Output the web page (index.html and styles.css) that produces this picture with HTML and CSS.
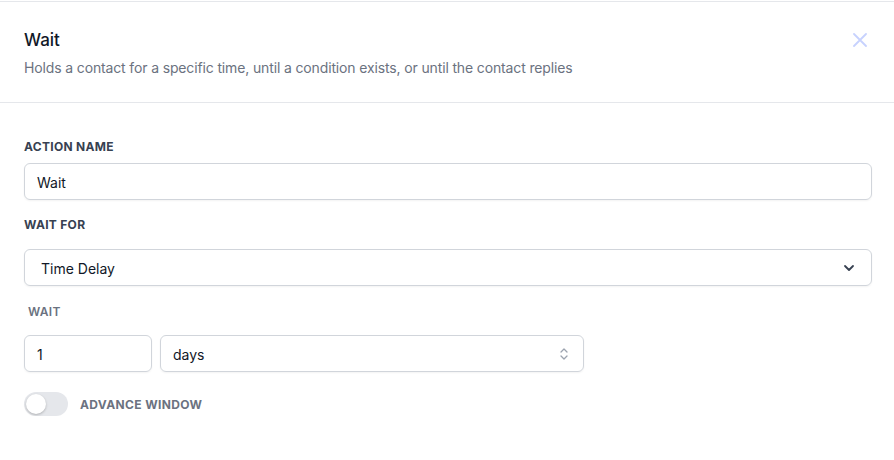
FILE: index.html
```html
<!DOCTYPE html>
<html>
<head>
<meta charset="utf-8">
<link rel="stylesheet" href="styles.css">
</head>
<body>
<div class="panel">
  <header class="head">
    <div class="head-text">
      <h1 class="title">Wait</h1>
      <p class="subtitle">Holds a contact for a specific time, until a condition exists, or until the contact replies</p>
    </div>
    <button class="close" aria-label="Close">
      <svg width="14" height="14" viewBox="0 0 14 14"><path d="M1 1L13 13M13 1L1 13" stroke="#c7d2fe" stroke-width="1.8" stroke-linecap="round"/></svg>
    </button>
  </header>
  <div class="form">
    <label class="label">ACTION NAME</label>
    <div class="input full">Wait</div>
    <label class="label mt">WAIT FOR</label>
    <div class="input full select sel-pad">
      <span>Time Delay</span>
      <svg class="chev" width="12" height="8" viewBox="0 0 12 8"><path d="M2 2L6 6L10 2" fill="none" stroke="#374151" stroke-width="1.8" stroke-linecap="round" stroke-linejoin="round"/></svg>
    </div>
    <label class="label sub">WAIT</label>
    <div class="row">
      <div class="input num">1</div>
      <div class="input unit select">
        <span>days</span>
        <svg width="10" height="16" viewBox="0 0 10 16"><path d="M2 6L5 3L8 6M2 10L5 13L8 10" fill="none" stroke="#9ca3af" stroke-width="1.3" stroke-linecap="round" stroke-linejoin="round"/></svg>
      </div>
    </div>
    <div class="toggle-row">
      <span class="toggle"><span class="knob"></span></span>
      <span class="toggle-label">ADVANCE WINDOW</span>
    </div>
  </div>
</div>
</body>
</html>
```
FILE: styles.css
```css
* { box-sizing: border-box; }
html, body { margin: 0; padding: 0; background: #fff; }
body { font-family: Inter, "Noto Sans", sans-serif; color: #111827; }
.panel { padding-top: 1px; }
.head {
  border-top: 1px solid #e5e7eb;
  border-bottom: 1px solid #e5e7eb;
  height: 102px;
  padding: 24px 27px 0 24px;
  display: flex;
  justify-content: space-between;
  align-items: flex-start;
}
.title { margin: 0; font-size: 17px; line-height: 28px; font-weight: 500; color: #111827; }
.subtitle { margin: 4px 0 0; font-size: 14px; line-height: 20px; color: #6b7280; letter-spacing: -0.01em; }
.close { border: 0; background: none; padding: 0; margin-top: 7px; display: flex; }
.form { padding: 33px 22px 0 24px; display: flex; flex-direction: column; }
.label { display: block; font-size: 12px; line-height: 20px; padding-top: 1px; font-weight: 700; letter-spacing: 0.025em; color: #374151; margin-bottom: 6px; }
.label.mt { margin-top: 14px; margin-bottom: 14px; }
.label.sub { margin-top: 14px; margin-bottom: 13px; padding-top: 2px; padding-left: 4px; color: #6b7280; font-weight: 600; }
.input {
  height: 37px;
  border: 1px solid #d1d5db;
  border-radius: 6px;
  box-shadow: 0 1px 2px rgba(0,0,0,0.05);
  font-size: 14px;
  color: #111827;
  padding: 1px 12px 0;
  display: flex;
  align-items: center;
}
.select { justify-content: space-between; }
.sel-pad { padding-left: 16px; padding-right: 16px; }
.row { display: flex; gap: 8px; }
.num { width: 128px; }
.unit { width: 424px; padding-right: 14px; }
.toggle-row { display: flex; align-items: center; gap: 12px; margin-top: 20px; }
.toggle { width: 44px; height: 24px; border-radius: 12px; background: #e5e7eb; position: relative; display: inline-block; }
.knob { position: absolute; left: 2px; top: 2px; width: 20px; height: 20px; border-radius: 50%; background: #fff; box-shadow: 0 1px 3px rgba(0,0,0,0.15), 0 1px 2px rgba(0,0,0,0.1); }
.toggle-label { font-size: 12px; font-weight: 700; letter-spacing: 0.03em; color: #6b7280; }
```
